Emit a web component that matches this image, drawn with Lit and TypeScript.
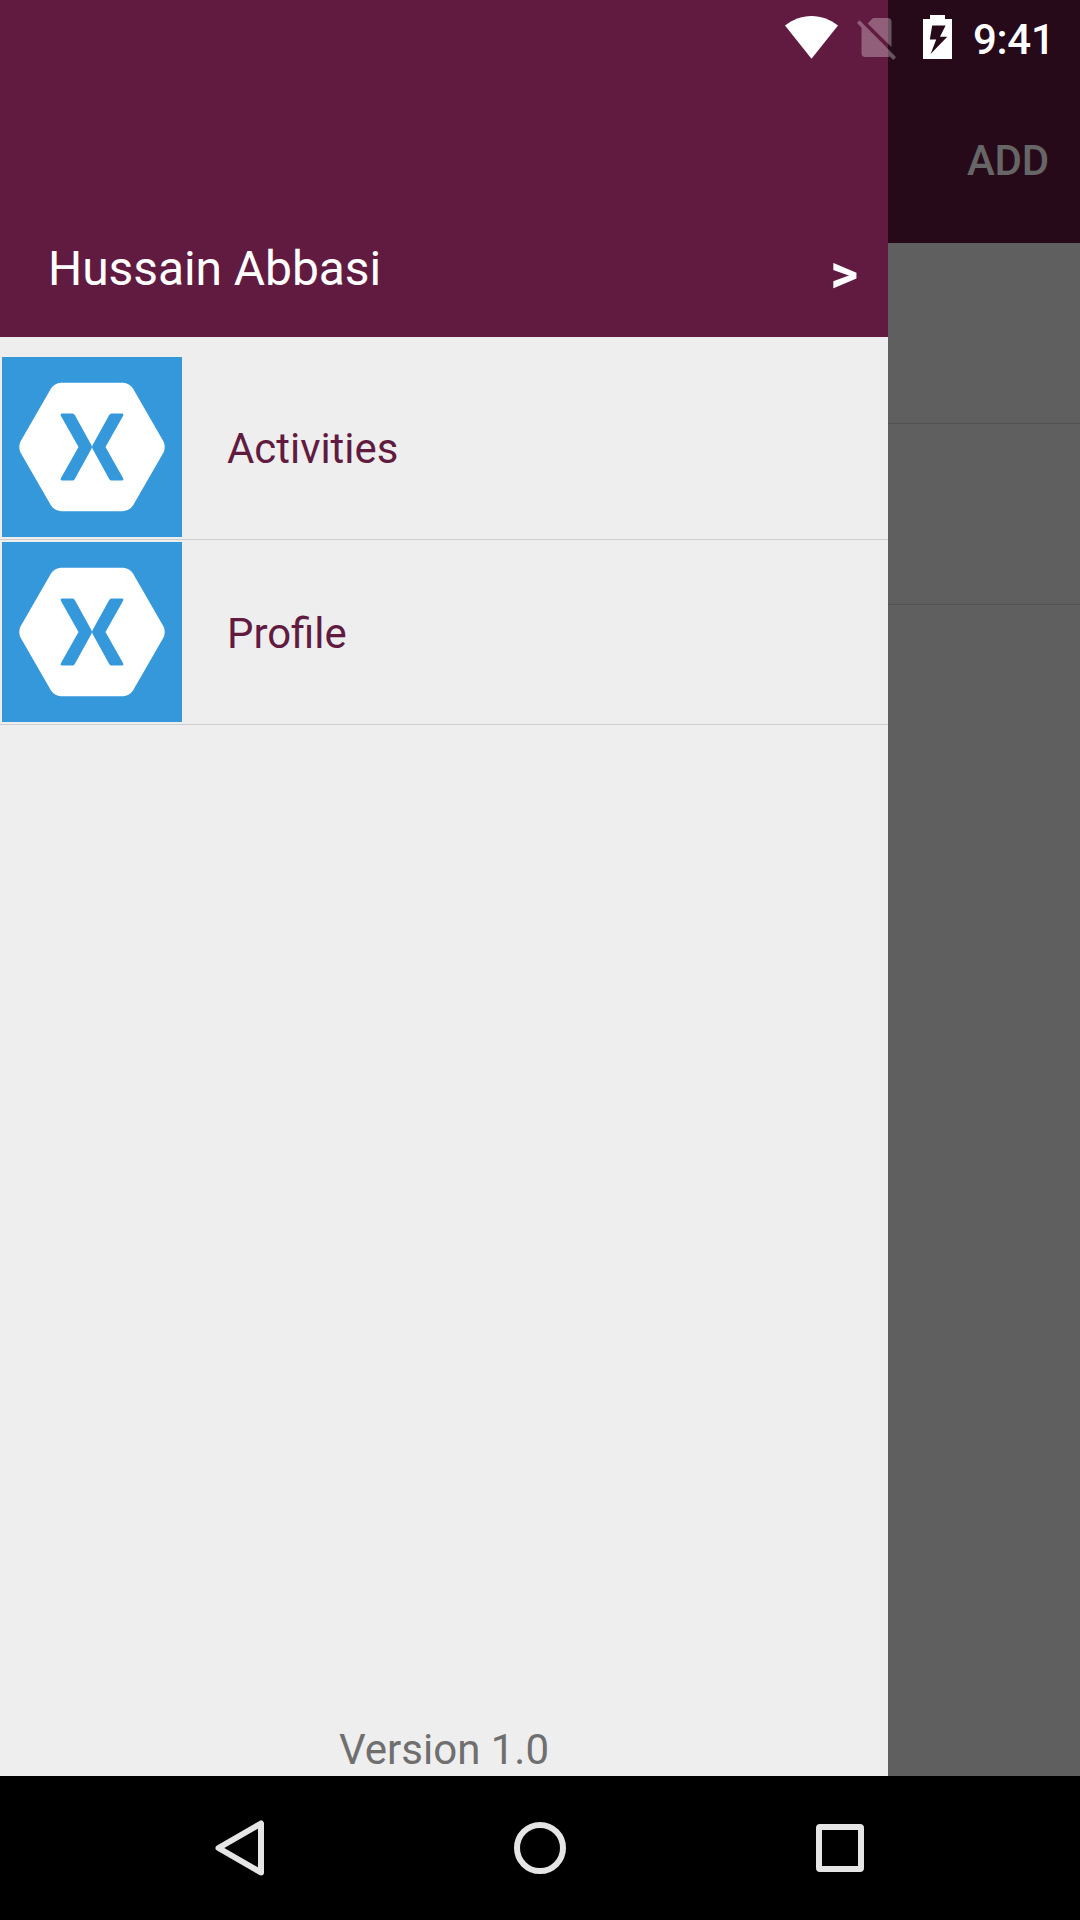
import { LitElement, html, css } from "lit";
import { customElement, property } from "lit/decorators.js";

@customElement("status-bar")
class StatusBar extends LitElement {
  static styles = css`
    :host {
      display: flex;
      justify-content: flex-end;
      height: 72px;
      color: #fff;
      font: 500 42px/72px Roboto, sans-serif;
    }
    .icons { width: 190px; height: 72px; flex: none; }
    .clock { width: 81px; margin-right: 26px; margin-left: 3px; line-height: 79px; letter-spacing: -0.3px; white-space: nowrap; }
  `;
  render() {
    return html`
      <svg class="icons" viewBox="780 0 190 72" fill="#fff">
        <path d="M811.5 58.7 785 25.6C792.5 19.5 801.5 16 811.5 16S830.5 19.5 838 25.6Z" />
        <g fill-opacity=".3">
          <path d="M873 18H887.5Q891.500 18 891.500 22V47L867.600 23.400Z" />
          <path d="M861.500 27.500 857 23 859.500 20.200 896 57 893.400 60 889.800 56.400Q889 57 887.500 57H865.500Q861.500 57 861.500 53Z" />
        </g>
        <path fill-rule="evenodd" d="M930 15H945V19H952V59H923V19H930ZM932.200 25.500 929.800 39.500H936.200L930.600 54 947.300 36.700H940L945.600 25.500Z" />
      </svg>
      <span class="clock">9:41</span>
    `;
  }
}

@customElement("menu-row")
class MenuRow extends LitElement {
  @property() label = "";
  static styles = css`
    :host {
      display: flex;
      align-items: center;
      gap: 45px;
      height: 184px;
      padding-left: 2px;
      border-bottom: 1px solid #cfcfcf;
      color: #621b40;
      font: 400 41.9px/50px Roboto, sans-serif;
    }
    .logo { width: 180px; height: 180px; flex: none; background: #3498db; }
    .label { padding-top: 3px; }
  `;
  render() {
    return html`
      <svg class="logo" viewBox="0 0 180 180">
        <path
          fill="#fff"
          d="M59 25.700H121Q127.500 26.200 131 31.500L161.500 84.500Q164 90 161.500 95.500L131 148.500Q127.500 153.800 121 154.300H59Q52.500 153.800 49 148.500L18.500 95.500Q16 90 18.500 84.500L49 31.500Q52.500 26.200 59 25.700Z"
        />
        <path
          fill="#3498db"
          d="M60 56.500H70.500Q72 56.500 72.800 58L89.600 88.500 90 90 90.400 88.500 107.200 58Q108 56.500 109.500 56.500H120Q122.200 57 121 59L103.500 90 121 121Q122.200 123 120 123.500H109.500Q108 123.500 107.200 122L90.400 91.500 90 90 89.600 91.500 72.800 122Q72 123.500 70.500 123.500H60Q57.800 123 59 121L76.500 90 59 59Q57.800 57 60 56.500Z"
        />
      </svg>
      <span class="label">${this.label}</span>
    `;
  }
}

@customElement("nav-bar")
class NavBar extends LitElement {
  static styles = css`
    :host {
      display: flex;
      justify-content: center;
      gap: 220px;
      height: 144px;
      background: #000;
    }
    .key { width: 80px; height: 144px; fill: none; stroke: #e5e5e5; stroke-width: 6; stroke-linejoin: round; }
  `;
  render() {
    return html`
      <svg class="key" viewBox="0 -14 80 144"><path d="M61 33.500V82.500L18.500 58Z" /></svg>
      <svg class="key" viewBox="0 -14 80 144"><circle cx="40" cy="58" r="23" /></svg>
      <svg class="key" viewBox="0 -14 80 144"><rect x="19" y="37" width="42" height="42" rx="1" /></svg>
    `;
  }
}

@customElement("app-root")
class AppRoot extends LitElement {
  static styles = css`
    :host {
      display: flex;
      flex-direction: column;
      position: relative;
      width: 1080px;
      height: 1920px;
      overflow: hidden;
      font-family: Roboto, sans-serif;
    }
    .status { position: absolute; top: 0; right: 0; }
    .body { flex: 1; display: flex; min-height: 0; }
    .drawer { width: 888px; display: flex; flex-direction: column; background: #eee; }
    .header {
      box-sizing: border-box;
      height: 337px;
      padding: 0 30px 30px 48px;
      display: flex;
      align-items: flex-end;
      justify-content: space-between;
      background: #621b40;
      color: #fff;
    }
    .name { font-size: 48px; line-height: 60px; padding-bottom: 8px; letter-spacing: -0.08px; }
    .more { font-size: 54px; line-height: 64px; font-weight: 700; padding-bottom: 1px; }
    .menu { flex: 1; padding-top: 18px; }
    .version { text-align: center; font-size: 42px; line-height: 50px; color: #6f6f6f; padding-bottom: 1px; }
    .page { flex: 1; background: #5f5f5f; }
    .toolbar {
      box-sizing: border-box;
      height: 243px;
      padding: 72px 31px 0 0;
      display: flex;
      justify-content: flex-end;
      background: #270a19;
      color: #666;
      font-size: 42px;
      font-weight: 500;
      line-height: 177px;
      letter-spacing: -0.2px;
    }
    .item { height: 180px; border-bottom: 1px solid #525252; }
  `;
  render() {
    return html`
      <div class="body">
        <div class="drawer">
          <div class="header">
            <span class="name">Hussain Abbasi</span>
            <span class="more">&gt;</span>
          </div>
          <div class="menu">
            ${["Activities", "Profile"].map((l) => html`<menu-row .label=${l}></menu-row>`)}
          </div>
          <div class="version">Version 1.0</div>
        </div>
        <div class="page">
          <div class="toolbar"><span>ADD</span></div>
          <div class="item"></div>
          <div class="item"></div>
        </div>
      </div>
      <nav-bar></nav-bar>
      <status-bar class="status"></status-bar>
    `;
  }
}
